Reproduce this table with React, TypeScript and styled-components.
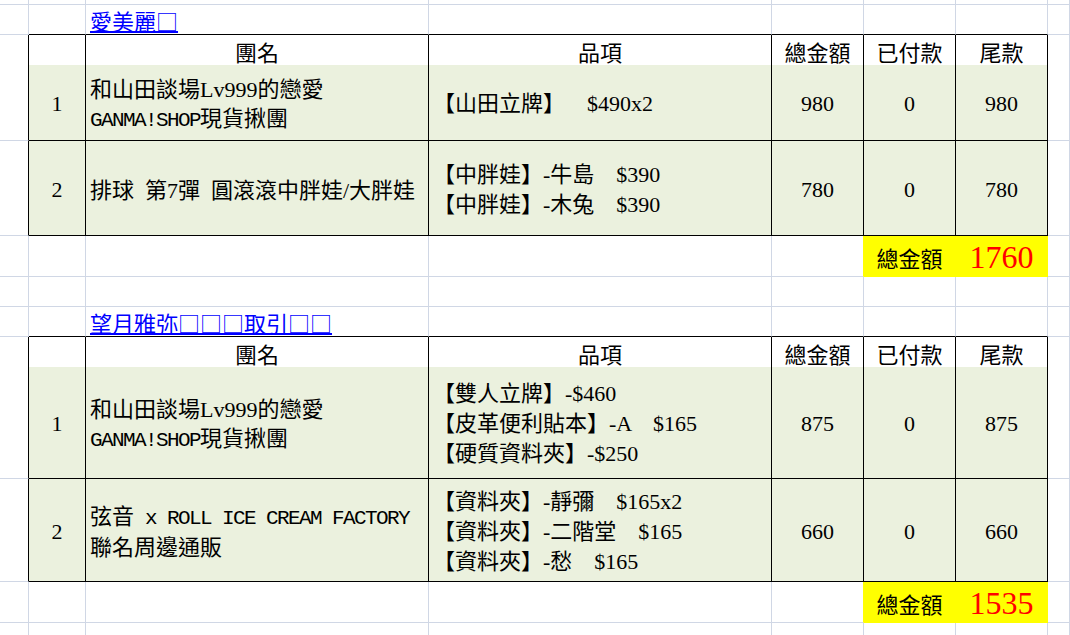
import React from "react";
import styled, { createGlobalStyle } from "styled-components";

const GRID = "#d0d7e5";
const INK = "#000000";
const GREEN = "#ebf1de";
const YELLOW = "#ffff00";
const COLS = "29px 57px 343px 343px 92px 92px 92px 1fr";

type Order = {
  name: React.ReactNode[];
  items: string[];
  total: number;
  paid: number;
  rest: number;
  height: number;
};

type Group = { title: string; orders: Order[]; sum: number };

const GlobalStyle = createGlobalStyle`
  body {
    margin: 0;
    background: #ffffff;
    color: #000000;
    font-family: "Liberation Serif", "Noto Sans CJK TC", serif;
    font-size: 22px;
    text-spacing-trim: space-all;
    overflow: hidden;
  }
`;

const Sheet = styled.div`
  display: flex;
  flex-direction: column;
  width: 1070px;
  height: 635px;
  overflow: hidden;
`;

const Row = styled.div<{ $h: number }>`
  display: grid;
  grid-template-columns: ${COLS};
  height: ${(p) => p.$h}px;
  flex-shrink: 0;
`;

const Cell = styled.div<{
  $r: string;
  $b: string;
  $bg?: string;
  $left?: boolean;
  $shift?: number;
}>`
  box-sizing: border-box;
  display: flex;
  align-items: center;
  justify-content: ${(p) => (p.$left ? "flex-start" : "center")};
  padding-left: ${(p) => (p.$left ? "4px" : "0")};
  padding-top: ${(p) => p.$shift ?? 0}px;
  border-right: 1px solid ${(p) => p.$r};
  border-bottom: 1px solid ${(p) => p.$b};
  background: ${(p) => p.$bg ?? "#ffffff"};
  white-space: pre;
  min-width: 0;
  position: relative;
  z-index: ${(p) => (p.$left ? 1 : 0)};
`;

const Lines = styled.div<{ $lh: number }>`
  display: flex;
  flex-direction: column;
  line-height: ${(p) => p.$lh}px;
`;

// half-width latin run, fixed pitch like the sheet's Ming font
const Half = styled.span`
  font-family: "Liberation Mono", monospace;
  font-size: 21px;
  letter-spacing: -1.6px;
`;

const Link = styled.a`
  font-family: "Noto Sans CJK TC", sans-serif;
  color: #0000ff;
  text-decoration: underline;
  text-underline-offset: 1px;
  line-height: 24px;
  cursor: pointer;
`;

const Sum = styled.span`
  color: #ff0000;
  font-size: 32px;
  line-height: 36px;
`;

const groups: Group[] = [
  {
    title: "愛美麗□",
    sum: 1760,
    orders: [
      {
        name: [
          "和山田談場Lv999的戀愛",
          <>
            <Half>GANMA!SHOP</Half>現貨揪團
          </>,
        ],
        items: ["【山田立牌】　$490x2"],
        total: 980,
        paid: 0,
        rest: 980,
        height: 76,
      },
      {
        name: ["排球  第7彈  圓滾滾中胖娃/大胖娃"],
        items: ["【中胖娃】-牛島　$390", "【中胖娃】-木兔　$390"],
        total: 780,
        paid: 0,
        rest: 780,
        height: 95,
      },
    ],
  },
  {
    title: "望月雅弥□□□取引□□",
    sum: 1535,
    orders: [
      {
        name: [
          "和山田談場Lv999的戀愛",
          <>
            <Half>GANMA!SHOP</Half>現貨揪團
          </>,
        ],
        items: ["【雙人立牌】-$460", "【皮革便利貼本】-A　$165", "【硬質資料夾】-$250"],
        total: 875,
        paid: 0,
        rest: 875,
        height: 112,
      },
      {
        name: [
          <>
            弦音<Half> x ROLL ICE CREAM FACTORY</Half>
          </>,
          "聯名周邊通販",
        ],
        items: ["【資料夾】-靜彌　$165x2", "【資料夾】-二階堂　$165", "【資料夾】-愁　$165"],
        total: 660,
        paid: 0,
        rest: 660,
        height: 103,
      },
    ],
  },
];

const headers = ["團名", "品項", "總金額", "已付款", "尾款"];

// empty sheet row, gridlines only
const BlankRow = ({ h }: { h: number }) => (
  <Row $h={h}>
    {Array.from({ length: 8 }).map((_, i) => (
      <Cell key={i} $r={GRID} $b={GRID} />
    ))}
  </Row>
);

// row inside the bordered table: column 0 carries the left edge
const tableEdge = (i: number) => ({
  $r: i === 7 ? GRID : INK,
  $b: i >= 1 && i <= 6 ? INK : GRID,
});

const GroupBlock = ({ group }: { group: Group }) => (
  <>
    <Row $h={30}>
      <Cell $r={GRID} $b={GRID} />
      <Cell $r={GRID} $b={INK} />
      <Cell $r={GRID} $b={INK} $left>
        <Link>{group.title}</Link>
      </Cell>
      <Cell $r={GRID} $b={INK} />
      <Cell $r={GRID} $b={INK} />
      <Cell $r={GRID} $b={INK} />
      <Cell $r={GRID} $b={INK} />
      <Cell $r={GRID} $b={GRID} />
    </Row>

    <Row $h={30}>
      <Cell {...tableEdge(0)} />
      <Cell {...tableEdge(1)} />
      {headers.map((h, i) => (
        <Cell key={h} {...tableEdge(i + 2)}>
          {h}
        </Cell>
      ))}
      <Cell {...tableEdge(7)} />
    </Row>

    {group.orders.map((o, idx) => (
      <Row $h={o.height} key={idx}>
        <Cell {...tableEdge(0)} />
        <Cell {...tableEdge(1)} $bg={GREEN} $shift={3}>
          {idx + 1}
        </Cell>
        <Cell {...tableEdge(2)} $bg={GREEN} $left $shift={4}>
          <Lines $lh={29}>
            {o.name.map((n, k) => (
              <span key={k}>{n}</span>
            ))}
          </Lines>
        </Cell>
        <Cell {...tableEdge(3)} $bg={GREEN} $left $shift={3}>
          <Lines $lh={30}>
            {o.items.map((it) => (
              <span key={it}>{it}</span>
            ))}
          </Lines>
        </Cell>
        <Cell {...tableEdge(4)} $bg={GREEN} $shift={3}>
          {o.total}
        </Cell>
        <Cell {...tableEdge(5)} $bg={GREEN} $shift={3}>
          {o.paid}
        </Cell>
        <Cell {...tableEdge(6)} $bg={GREEN} $shift={3}>
          {o.rest}
        </Cell>
        <Cell {...tableEdge(7)} />
      </Row>
    ))}

    <Row $h={41}>
      <Cell $r={GRID} $b={GRID} />
      <Cell $r={GRID} $b={GRID} />
      <Cell $r={GRID} $b={GRID} />
      <Cell $r={GRID} $b={GRID} />
      <Cell $r={YELLOW} $b={GRID} />
      <Cell $r={YELLOW} $b={YELLOW} $bg={YELLOW} $shift={2}>
        總金額
      </Cell>
      <Cell $r={YELLOW} $b={YELLOW} $bg={YELLOW} $shift={2}>
        <Sum>{group.sum}</Sum>
      </Cell>
      <Cell $r={GRID} $b={GRID} />
    </Row>
  </>
);

export default function App() {
  return (
    <>
      <GlobalStyle />
      <Sheet>
        <BlankRow h={5} />
        <GroupBlock group={groups[0]} />
        <BlankRow h={30} />
        <GroupBlock group={groups[1]} />
        <BlankRow h={13} />
      </Sheet>
    </>
  );
}
